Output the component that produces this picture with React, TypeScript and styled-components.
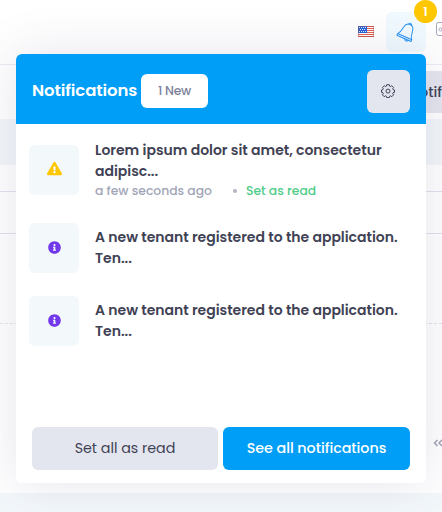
import React from "react";
import styled, { createGlobalStyle } from "styled-components";
import { FaExclamationTriangle, FaInfoCircle } from "react-icons/fa";

const GlobalStyle = createGlobalStyle`
  *, *::before, *::after { box-sizing: border-box; }
  html, body { margin: 0; padding: 0; }
  body { overflow: hidden; font-family: Poppins, Inter, sans-serif; color: #3f4254; }
  button { font: inherit; border: 0; padding: 0; margin: 0; white-space: nowrap; }
`;

const Page = styled.div`
  position: relative;
  display: flex;
  flex-direction: column;
  width: 442px;
  height: 512px;
  overflow: hidden;
  background: #f3f8fb;
`;

const TopBar = styled.header`
  display: flex;
  justify-content: flex-end;
  align-items: flex-start;
  height: 65px;
  flex: none;
  padding-top: 12px;
  background: #fff;
  border-bottom: 1px solid #ebedf3;
`;

const Flag = styled.svg`
  width: 16px;
  height: 11px;
  margin: 14px 12px 0 0;
`;

const BellButton = styled.button`
  position: relative;
  width: 40px;
  height: 40px;
  border-radius: 6px;
  background: #f1faff;
`;

const BellDrawing = styled.svg`
  display: block;
  width: 40px;
  height: 40px;
`;

const CountBadge = styled.span`
  position: absolute;
  top: -12px;
  right: -11px;
  width: 23px;
  height: 23px;
  border-radius: 50%;
  background: #ffc700;
  color: #fff;
  font-size: 12px;
  font-weight: 600;
  line-height: 23px;
  text-align: center;
`;

const ChatDrawing = styled.svg`
  width: 6px;
  height: 17px;
  margin: 9px 0 0 10px;
`;

const SubHeader = styled.div`
  display: flex;
  justify-content: flex-end;
  height: 54px;
  flex: none;
  padding-top: 6px;
  background: #fff;
`;

const ToolbarButton = styled.button`
  width: 36px;
  height: 42px;
  overflow: hidden;
  background: #e4e6ef;
  color: #3f4254;
  font-size: 14.3px;
  font-weight: 500;
  text-align: right;
`;

const Sheet = styled.main`
  display: flex;
  flex-direction: column;
  height: 328px;
  flex: none;
  margin-top: 46px;
  background: #fff;
`;

const SheetRow = styled.div<{ $height: number; $dashed?: boolean }>`
  height: ${(p) => p.$height}px;
  flex: none;
  border-bottom: 1px ${(p) => (p.$dashed ? "dashed #e4e6ef" : "solid #e1e1ec")};
`;

const Pager = styled.div`
  display: flex;
  justify-content: flex-end;
  padding-top: 114px;
`;

const PagerDrawing = styled.svg`
  width: 9px;
  height: 10px;
`;

const Panel = styled.section`
  position: absolute;
  top: 54px;
  left: 16px;
  display: flex;
  flex-direction: column;
  width: 410px;
  height: 429px;
  border-radius: 6px;
  background: #fff;
  box-shadow: 0 0 50px rgba(82, 63, 105, 0.15);
`;

const PanelHeader = styled.div`
  display: flex;
  align-items: center;
  height: 70px;
  flex: none;
  padding: 0 16px;
  border-radius: 6px 6px 0 0;
  background: #009ef7;
`;

const Title = styled.h2`
  width: 109px;
  flex: none;
  margin: 4px 0 0;
  color: #fff;
  font-size: 16.5px;
  font-weight: 600;
  line-height: 24px;
  letter-spacing: -0.1px;
  white-space: nowrap;
`;

const NewCount = styled.span`
  display: flex;
  align-items: center;
  justify-content: center;
  width: 67px;
  height: 34px;
  margin-top: 4px;
  border-radius: 6px;
  background: #fff;
  color: #7e8299;
  font-size: 12.35px;
  font-weight: 500;
  letter-spacing: -0.2px;
`;

const GearButton = styled.button`
  display: grid;
  place-items: center;
  width: 43px;
  height: 43px;
  margin: 4px 0 0 auto;
  border-radius: 6px;
  background: #e4e6ef;
  svg { width: 14px; height: 14px; margin-right: 1px; }
`;

const List = styled.div`
  display: flex;
  flex-direction: column;
  gap: 23px;
  height: 303px;
  flex: none;
  padding: 15px 13px 0;
`;

const Item = styled.article<{ $tall?: boolean }>`
  display: flex;
  align-items: center;
  height: ${(p) => (p.$tall ? 61 : 50)}px;
  flex: none;
`;

const Symbol = styled.div<{ $color: string }>`
  display: grid;
  place-items: center;
  width: 50px;
  height: 50px;
  flex: none;
  margin-right: 16px;
  padding-bottom: 2px;
  border-radius: 6px;
  background: #f3f8fb;
  color: ${(p) => p.$color};
  svg { display: block; }
`;

const ItemBody = styled.div`
  flex: 1;
`;

const Message = styled.div`
  font-size: 14px;
  font-weight: 600;
  line-height: 21px;
  letter-spacing: -0.02px;
  color: #3f4254;
  white-space: nowrap;
`;

const Meta = styled.div`
  display: flex;
  align-items: center;
  height: 18px;
  color: #a1a5b7;
  font-size: 12.35px;
  font-weight: 500;
  line-height: 18px;
`;

const Age = styled.span`
  width: 138px;
`;

const Dot = styled.i`
  width: 4px;
  height: 4px;
  margin-right: 9px;
  border-radius: 50%;
  background: #b5b5c3;
`;

const ReadLink = styled.span`
  color: #50cd89;
`;

const PanelFooter = styled.footer`
  display: grid;
  grid-template-columns: 186px 187px;
  gap: 5px;
  padding: 0 16px;
`;

const Action = styled.button<{ $primary?: boolean }>`
  height: 43px;
  border-radius: 6px;
  background: ${(p) => (p.$primary ? "#009ef7" : "#e4e6ef")};
  color: ${(p) => (p.$primary ? "#fff" : "#3f4254")};
  font-size: 14.3px;
  font-weight: ${(p) => (p.$primary ? 500 : 400)};
  letter-spacing: -0.04px;
`;

const FlagIcon = () => (
  <Flag viewBox="0 0 16 11">
    <rect width="16" height="11" fill="#fff" />
    <path d="M0 .5h16M0 2.5h16M0 4.5h16M0 6.5h16M0 8.5h16M0 10.5h16" stroke="#e8604f" />
    <rect width="9" height="7" fill="#2563dc" />
    <path d="M1 1.5h7M2 3.5h6M1 5.5h7" stroke="#dce8ff" strokeDasharray="1 1" />
    <rect x=".5" y=".5" width="15" height="10" fill="none" stroke="#a64b4b" strokeOpacity=".4" />
  </Flag>
);

const BellIcon = () => (
  <BellDrawing viewBox="0 0 40 40" fill="none" stroke="#2492f2" strokeWidth="1" strokeLinecap="round" strokeLinejoin="round">
    <g transform="translate(20.8 20) rotate(24) scale(.94)">
      <path d="M-8.2 5.400h16.400v2h-16.400zM-8 5.200C-5.400 2.800-5.700-.7-5.200-3.500c.5-3.300 2.600-5.200 5.200-5.200s4.700 1.900 5.200 5.200c.5 2.800.2 6.300 2.800 8.700" />
      <path d="M-1.500-8.700c0-1.900 3-1.900 3 0M1 7.600c.4 1.900 3.400 1.900 3.800 0" />
    </g>
  </BellDrawing>
);

const GearIcon = () => (
  <svg viewBox="0 0 14 14" fill="none" stroke="#3f4254" strokeWidth="1" strokeLinejoin="round">
    <path d="M5.700.7h2.600l.3 1.500.9.400 1.300-.9 1.800 1.800-.9 1.300.400.9 1.400.3v2.400l-1.400.3-.4.9.9 1.300-1.800 1.800-1.300-.9-.9.400-.3 1.400H5.700l-.3-1.400-.9-.4-1.300.9-1.800-1.800.9-1.300-.4-.9L.5 8.400V6l1.400-.3.4-.9-.9-1.300 1.800-1.800 1.300.9.900-.4z" />
    <circle cx="7" cy="7.100" r="2" />
  </svg>
);

export default function App() {
  return (
    <>
      <GlobalStyle />
      <Page>
        <TopBar>
          <FlagIcon />
          <BellButton aria-label="Notifications">
            <BellIcon />
            <CountBadge>1</CountBadge>
          </BellButton>
          <ChatDrawing viewBox="0 0 6 17" fill="none" stroke="#a3a6c2">
            <path d="M6 1.500H2.500a2 2 0 0 0-2 2v9a2 2 0 0 0 2 2H6" />
            <circle cx="4.500" cy="8.500" r="1.500" />
          </ChatDrawing>
        </TopBar>
        <SubHeader>
          <ToolbarButton>Notif</ToolbarButton>
        </SubHeader>
        <Sheet>
          <SheetRow $height={27} />
          <SheetRow $height={42} />
          <SheetRow $height={90} $dashed />
          <Pager>
            <PagerDrawing viewBox="0 0 9 10" fill="none" stroke="#a1a5b7" strokeWidth="1.500">
              <path d="M4.500 2L1.500 5l3 3M9 2L6 5l3 3" />
            </PagerDrawing>
          </Pager>
        </Sheet>
        <Panel>
          <PanelHeader>
            <Title>Notifications</Title>
            <NewCount>1 New</NewCount>
            <GearButton aria-label="Settings"><GearIcon /></GearButton>
          </PanelHeader>
          <List>
            <Item $tall>
              <Symbol $color="#ffc700"><FaExclamationTriangle size={15} /></Symbol>
              <ItemBody>
                <Message>Lorem ipsum dolor sit amet, consectetur<br />adipisc...</Message>
                <Meta>
                  <Age>a few seconds ago</Age>
                  <Dot />
                  <ReadLink>Set as read</ReadLink>
                </Meta>
              </ItemBody>
            </Item>
            {[1, 2].map((id) => (
              <Item key={id}>
                <Symbol $color="#7239ea"><FaInfoCircle size={13} /></Symbol>
                <ItemBody>
                  <Message>A new tenant registered to the application.<br />Ten...</Message>
                </ItemBody>
              </Item>
            ))}
          </List>
          <PanelFooter>
            <Action>Set all as read</Action>
            <Action $primary>See all notifications</Action>
          </PanelFooter>
        </Panel>
      </Page>
    </>
  );
}
